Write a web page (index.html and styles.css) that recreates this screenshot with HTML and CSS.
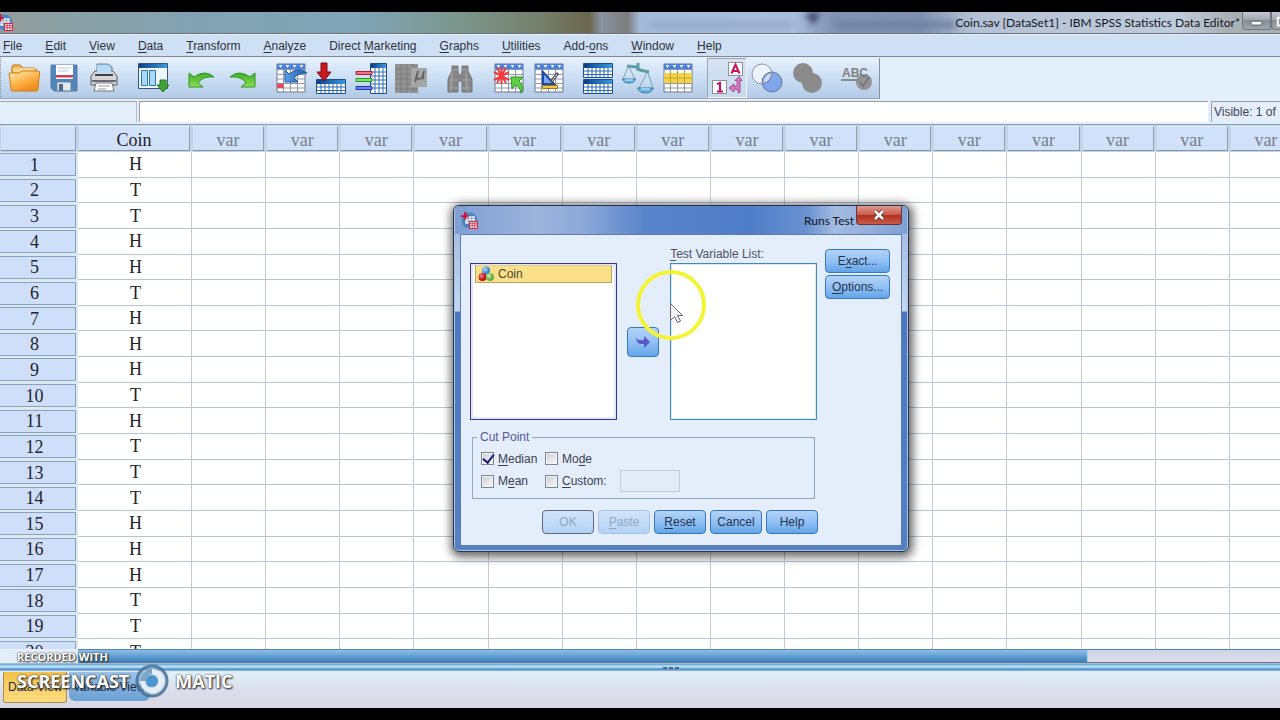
FILE: index.html
```html
<!DOCTYPE html>
<html lang="en">
<head>
    <meta charset="UTF-8">
    <meta name="viewport" content="width=device-width, initial-scale=1.0">
    <title>Coin.sav [DataSet1] - IBM SPSS Statistics Data Editor</title>
    <link rel="stylesheet" href="styles.css">
</head>
<body>
    <svg class="defs" aria-hidden="true">
        <defs>
            <linearGradient id="gBlue" x1="0" x2="1"><stop offset="0" stop-color="#0c3f86"/><stop offset="1" stop-color="#3a9ade"/></linearGradient>
            <linearGradient id="gOrange" x1="0" y1="0" x2="0.6" y2="1"><stop offset="0" stop-color="#fff0b8"/><stop offset="0.6" stop-color="#fdb043"/><stop offset="1" stop-color="#f08a1c"/></linearGradient>
            <linearGradient id="gGreen" x1="0" y1="0" x2="0" y2="1"><stop offset="0" stop-color="#3fae2c"/><stop offset="1" stop-color="#8be04f"/></linearGradient>
            <linearGradient id="gArrow" x1="0" y1="0" x2="1" y2="0"><stop offset="0" stop-color="#5a9be6"/><stop offset="1" stop-color="#1c5bb0"/></linearGradient>
            <radialGradient id="gRed" cx="0.35" cy="0.35"><stop offset="0" stop-color="#f58a8a"/><stop offset="1" stop-color="#c01010"/></radialGradient>
            <radialGradient id="gBall" cx="0.35" cy="0.35"><stop offset="0" stop-color="#b5dbf8"/><stop offset="1" stop-color="#3b86cf"/></radialGradient>
            <radialGradient id="gLime" cx="0.35" cy="0.35"><stop offset="0" stop-color="#d3f0b0"/><stop offset="1" stop-color="#62ad46"/></radialGradient>
            <symbol id="app" viewBox="0 0 16 16">
                <circle cx="8" cy="8" r="7.5" fill="#4c85c0"/>
                <path d="M4 4h9v7H4z" fill="#eef5fb"/>
                <path d="M4 6h9M4 8.5h9M7 4v7M10 4v7" stroke="#8aa6c2" stroke-width="0.8"/>
                <path d="M0 4h7M4 0v7" stroke="#cf1136" stroke-width="2"/>
                <path d="M8 9h7.5v6.500H8z" fill="#fff" stroke="#d32a46"/>
                <path d="M8 11h7.5M8 13h7.5M10.500 9v7M13 9v7" stroke="#d32a46" stroke-width="0.8"/>
            </symbol>
            <symbol id="sheet" viewBox="0 0 32 32">
                <path d="M2 2h28v28H2z" fill="#fff" stroke="#6d7488"/>
                <path d="M2 2h28v5H2z" fill="#4a80dc"/>
                <path d="M3.500 3h4l-2 3zM10.500 3h4l-2 3zM17.500 3h4l-2 3zM24.500 3h4l-2 3z" fill="#e8f0ff"/>
                <path d="M2 7.500h28M2 12.500h28M2 17h28M2 21.500h28M2 26h28M8.500 7v23M15.500 7v23M22.500 7v23" stroke="#9097aa" stroke-width="1"/>
            </symbol>
            <symbol id="strip" viewBox="0 0 30 15">
                <path d="M0.500 0.500h29v14H0.500z" fill="#fff" stroke="#1b4f96"/>
                <path d="M1 1h28v4H1z" fill="url(#gBlue)"/>
                <path d="M1 8h28M1 11.500h28M5 5v9M9 5v9M13 5v9M17 5v9M21 5v9M25 5v9" stroke="#2f6caf"/>
            </symbol>
        </defs>
    </svg>

    <div class="window">
        <header class="titlebar">
            <svg class="app-icon" viewBox="0 0 16 16" aria-hidden="true"><use href="#app"/></svg>
            <div class="glass" aria-hidden="true"><i class="haze"></i><i class="notch"></i><i class="haze"></i></div>
            <span class="title">Coin.sav [DataSet1] - IBM SPSS Statistics Data Editor*</span>
            <div class="winbuttons">
                <button aria-label="Minimize"><svg viewBox="0 0 28 16"><rect x="8.500" y="8.500" width="11" height="4" rx="1" fill="#fff" stroke="#59616e"/></svg></button>
                <button aria-label="Restore"><svg viewBox="0 0 28 16"><rect x="9" y="2" width="10" height="8" fill="none" stroke="#fff" stroke-width="2"/><rect x="6" y="5" width="10" height="8" fill="#8a929c" stroke="#fff" stroke-width="2"/></svg></button>
            </div>
        </header>

        <nav class="menubar">
            <a href="#"><u>F</u>ile</a>
            <a href="#"><u>E</u>dit</a>
            <a href="#"><u>V</u>iew</a>
            <a href="#"><u>D</u>ata</a>
            <a href="#"><u>T</u>ransform</a>
            <a href="#"><u>A</u>nalyze</a>
            <a href="#">Direct <u>M</u>arketing</a>
            <a href="#"><u>G</u>raphs</a>
            <a href="#"><u>U</u>tilities</a>
            <a href="#">Add-<u>o</u>ns</a>
            <a href="#"><u>W</u>indow</a>
            <a href="#"><u>H</u>elp</a>
        </nav>

        <div class="toolrow">
            <div class="toolbar">
                <div class="group">
                    <button aria-label="Open"><svg viewBox="0 0 32 32">
                        <path d="M4 24V5q0-2 2-2h6l3 3h11q2 0 2 2v4" fill="#f7b44c" stroke="#b8731a"/>
                        <path d="M5 10h22V6H5z" fill="#fbd58c"/>
                        <path d="M1 11h10l3-2h16q2 0 1.500 2L30 27q0 2-2 2H5q-2 0-2-2z" fill="url(#gOrange)" stroke="#cc7f1c"/>
                    </svg></button>
                    <button aria-label="Save"><svg viewBox="0 0 32 32">
                        <path d="M3 3h26v26H6l-3-3z" fill="#4f86bd" stroke="#5c7da3"/>
                        <path d="M8 3h17v14H8z" fill="#fafcff"/>
                        <path d="M10 6h13M10 9h10" stroke="#b9c9dd"/>
                        <path d="M8 13h17v2.500H8z" fill="#d03a55"/>
                        <path d="M9 20h14v9H9z" fill="#e4e8ee" stroke="#71839b"/>
                        <path d="M11 22h4v7h-4z" fill="#4a6c94"/>
                    </svg></button>
                    <button aria-label="Print"><svg viewBox="0 0 32 32">
                        <path d="M9 12V2h11l4 3v7z" fill="#9fd0f5" stroke="#6f8093"/>
                        <path d="M3 14l4-5h18l4 5v9H3z" fill="#d6d6d8" stroke="#5c5c60"/>
                        <path d="M9 11V3h11l3 3v5z" fill="#b4dcf9"/>
                        <path d="M7 13h18" stroke="#444" stroke-width="2"/>
                        <path d="M4 19h24" stroke="#6c6c70" stroke-width="2"/>
                        <path d="M8 21h16l2 8H6z" fill="#fff" stroke="#77787c"/>
                        <path d="M10 24h12M10 27h8" stroke="#9a9ba0"/>
                    </svg></button>
                </div>
                <div class="group">
                    <button aria-label="Recall dialogs"><svg viewBox="0 0 32 32">
                        <path d="M1.500 1.500h29v25h-29z" fill="#eef5fc" stroke="#34567f"/>
                        <path d="M2 2h28v4H2z" fill="url(#gBlue)"/>
                        <path d="M4.500 8.500h6v15h-6zM12.500 8.500h6v15h-6z" fill="#a8d8f4" stroke="#2b78ae"/>
                        <path d="M23 18h6v5h3l-6 7-6-7h3z" fill="#3fa435" stroke="#237a1e"/>
                    </svg></button>
                </div>
                <div class="group">
                    <button aria-label="Undo"><svg viewBox="0 0 32 32"><path d="M3 11v14h14l-5-4q4-7 16-6Q19 7 8 15z" fill="url(#gGreen)" stroke="#2f9624"/></svg></button>
                    <button aria-label="Redo"><svg viewBox="0 0 32 32"><path d="M29 11v14H15l5-4q-4-7-16-6 9-8 20 0z" fill="url(#gGreen)" stroke="#2f9624"/></svg></button>
                </div>
                <div class="group">
                    <button aria-label="Go to case"><svg viewBox="0 0 32 32"><use href="#sheet"/><path d="M2 21.500h6.500V26H2z" fill="#e8495a"/><path d="M10 8v12h13l-4-4q4-5 13-5-8-7-18 1z" fill="url(#gArrow)" stroke="#2458a0"/></svg></button>
                    <button aria-label="Go to variable"><svg viewBox="0 0 32 32"><use href="#strip" x="1" y="17" width="30" height="15"/><path d="M6 1h6v9h4l-7 9-7-9h4z" fill="#c8191f" stroke="#7f1115"/></svg></button>
                    <button aria-label="Variables"><svg viewBox="0 0 32 32">
                        <path d="M15.500 1.500h16v30h-16z" fill="#fff" stroke="#1b4f96"/>
                        <path d="M16 2h15v4H16z" fill="url(#gBlue)"/>
                        <path d="M16 10h15M16 14h15M16 18h15M16 22h15M16 26h15M20 6v25M24 6v25M28 6v25" stroke="#2f6caf"/>
                        <path d="M1 9.500h16v3H1z" fill="#f27285" stroke="#b71d37"/><path d="M1 16.500h16v3H1z" fill="#7ee06c" stroke="#249a22"/><path d="M1 24.500h16v3H1z" fill="#6b87ea" stroke="#2338a6"/>
                    </svg></button>
                    <button aria-label="Run descriptive statistics" disabled><svg viewBox="0 0 32 32">
                        <path d="M0 2h23v29H0z" fill="#929292"/><path d="M0 7h23M0 12h23M0 17h23M0 22h23M0 27h23M6 2v29M12 2v29M18 2v29" stroke="#7c7c7c"/>
                        <path d="M16 6h16v19H16z" fill="#a6a6a6"/><path d="M20 20l3-11M23 9q-3 8 1 8t5-8q-2 7 0 8" fill="none" stroke="#666" stroke-width="2"/>
                    </svg></button>
                </div>
                <div class="group">
                    <button aria-label="Find" disabled><svg viewBox="0 0 32 32">
                        <path d="M8 4h6v5l1 4h2l1-4V4h6v5l4 8v13H18V19h-4v11H4V17l4-8z" fill="#858585" stroke="#777"/><path d="M8 8h6M18 8h6M5 18h9M18 18h9M5 26h9M18 26h9" stroke="#a6a6a6"/><path d="M8 11l-1 18M22 11l1 18" stroke="#9d9d9d" stroke-width="2"/>
                    </svg></button>
                </div>
                <div class="group">
                    <button aria-label="Insert cases"><svg viewBox="0 0 32 32"><use href="#sheet"/><path d="M8.500 5v17M1 10l15 8M1 18l15-8M4 6l9 15M13 6L4 21" stroke="#ef3b3b" stroke-width="2"/><path d="M18 15h12l-4 4q6 6 2 12-1-7-6-8l-3 4z" fill="#5cd040" stroke="#2f9624"/></svg></button>
                    <button aria-label="Insert variable"><svg viewBox="0 0 32 32"><use href="#sheet"/><path d="M10 10v12h11z" fill="#7fa7f0" stroke="#1c48ae" stroke-width="2"/><path d="M25 11l-7 9" stroke="#4b4f57" stroke-width="3"/><path d="M24 12l-5 7" stroke="#d9dde4"/><path d="M9.500 23.500h15v3h-15z" fill="#f3c63c" stroke="#9c7712"/></svg></button>
                </div>
                <div class="group">
                    <button aria-label="Split file"><svg viewBox="0 0 32 32"><use href="#strip" x="1" y="1" width="30" height="15"/><use href="#strip" x="1" y="17" width="30" height="15"/></svg></button>
                    <button aria-label="Weight cases"><svg viewBox="0 0 32 32">
                        <path d="M16 1v8M5 4l9 1 4 3 9 2" fill="none" stroke="#5f9da6" stroke-width="3"/>
                        <path d="M6 5L1 17M7 5l6 12M25 11l-8 15M26 11l5 15" stroke="#7ba3af"/>
                        <path d="M0.500 17h13q-1 4-6.500 4t-6.500-4zM15.500 26h16q-2 5-8 5t-8-5z" fill="#5fb4e2" stroke="#3a7ba6"/>
                        <path d="M3 18h8M19 27h9" stroke="#e2f4fc"/>
                    </svg></button>
                    <button aria-label="Select cases"><svg viewBox="0 0 32 32"><use href="#sheet"/><path d="M2 11h28v10H2z" fill="#f2d24a"/><path d="M2 16h28M8.500 11v10M15.500 11v10M22.500 11v10" stroke="#c9a526"/></svg></button>
                </div>
                <div class="group">
                    <button class="pressed" aria-label="Value labels"><svg viewBox="0 0 32 32">
                        <rect x="17.500" y="0.500" width="14" height="13" fill="#fff" stroke="#8b8fa0"/><path d="M20.500 11.500l4-9 4 9M22 9h5" fill="none" stroke="#c8125a" stroke-width="2"/>
                        <rect x="1.500" y="18.500" width="14" height="13" fill="#fff" stroke="#8b8fa0"/><path d="M6 22l3-1v8M6 29.500h6" fill="none" stroke="#c8125a" stroke-width="2"/>
                        <path d="M18 26l5-4v2.500h2q2-1 1-6h-2l4-4 3 4h-2v12h-2v-3l-4-0.500V30z" fill="#d77cc0" stroke="#a04a8c"/>
                    </svg></button>
                    <button aria-label="Use variable sets"><svg viewBox="0 0 32 32"><circle cx="11" cy="12" r="10" fill="#eef4fd" stroke="#8d97ab"/><circle cx="21" cy="20" r="10" fill="#6b94e8" fill-opacity="0.75" stroke="#6379a8"/><path d="M20.500 10.500A10 10 0 0 1 12 21.500 10 10 0 0 1 20.500 10.500z" fill="#c6d8f6" stroke="#7f8aa3"/></svg></button>
                    <button aria-label="Show all variables" disabled><svg viewBox="0 0 32 32"><circle cx="12" cy="11" r="10" fill="#8b8b8b"/><circle cx="21" cy="21" r="10" fill="#8b8b8b"/></svg></button>
                </div>
                <div class="group">
                    <button aria-label="Spell check" disabled><svg viewBox="0 0 32 32"><circle cx="24" cy="20" r="8" fill="#949494"/><path d="M20 20l3 4 6-9" fill="none" stroke="#7a7a7a" stroke-width="2"/><text x="2" y="15" class="abc">ABC</text><path d="M1 18h18" stroke="#8a8a8a" stroke-width="2"/></svg></button>
                </div>
            </div>
        </div>

        <div class="valuebar">
            <span class="cellname"></span>
            <input class="cellvalue" type="text" aria-label="Cell value">
            <span class="visible">Visible: 1 of</span>
        </div>

        <main class="grid">
            <table>
                <colgroup><col class="c-num"><col class="c-coin"></colgroup>
                <thead><tr id="head"><th><span></span></th><th class="named"><span>Coin</span></th></tr></thead>
                <tbody id="rows"></tbody>
            </table>
        </main>

        <div class="scroll"><div class="thumb"></div></div>
        <div class="splitter"><i></i><i></i><i></i></div>
        <footer class="tabs">
            <button class="tab active">Data View</button>
            <button class="tab">Variable View</button>
        </footer>
    </div>

    <section class="dialog" role="dialog" aria-labelledby="dlgTitle">
        <div class="dlg-title">
            <svg class="app-icon" viewBox="0 0 16 16" aria-hidden="true"><use href="#app"/></svg>
            <h1 id="dlgTitle">Runs Test</h1>
            <button class="close" aria-label="Close"><svg viewBox="0 0 14 12"><path d="M3 2l8 8M11 2l-8 8" stroke="#5b2620" stroke-width="4"/><path d="M3 2l8 8M11 2l-8 8" stroke="#fff" stroke-width="2.500"/></svg></button>
        </div>
        <form class="dlg-body">
            <div class="lists">
                <div class="source" role="listbox" aria-label="Variables">
                    <div class="item" role="option" aria-selected="true">
                        <svg viewBox="0 0 16 16" aria-hidden="true"><circle cx="8" cy="4.500" r="4" fill="url(#gBall)"/><circle cx="4.500" cy="11" r="4" fill="url(#gRed)"/><circle cx="12" cy="11" r="4" fill="url(#gLime)"/></svg>
                        Coin
                    </div>
                </div>
                <button type="button" class="move" aria-label="Move variable"><svg viewBox="0 0 16 16"><path d="M1 3q1 4 8 3V2l6 6-6 6v-4Q1 11 1 3z" fill="#5b55c8"/></svg></button>
                <div class="target">
                    <span id="tvl"><u>T</u>est Variable List:</span>
                    <div class="box" role="listbox" aria-labelledby="tvl"></div>
                </div>
                <div class="side">
                    <button type="button">E<u>x</u>act...</button>
                    <button type="button"><u>O</u>ptions...</button>
                </div>
            </div>
            <fieldset>
                <legend>Cut Point</legend>
                <label><input type="checkbox" checked><span><u>M</u>edian</span></label>
                <label><input type="checkbox"><span>Mo<u>d</u>e</span></label>
                <span></span>
                <label><input type="checkbox"><span>M<u>e</u>an</span></label>
                <label><input type="checkbox"><span><u>C</u>ustom:</span></label>
                <input class="custom" type="text" aria-label="Custom cut point" disabled>
            </fieldset>
            <div class="actions">
                <button type="button" class="ok" disabled>OK</button>
                <button type="button" disabled><u>P</u>aste</button>
                <button type="button"><u>R</u>eset</button>
                <button type="button">Cancel</button>
                <button type="button">Help</button>
            </div>
        </form>
    </section>

    <svg class="pointer" viewBox="0 0 72 72" aria-hidden="true">
        <circle cx="36" cy="36" r="33" fill="none" stroke="#f4f436" stroke-width="4"/>
        <path d="M35.500 34.500v17l4-4 3 6 3-1.500-3-5.500h5z" fill="#f4f4f6" stroke="#6a6672"/>
    </svg>

    <div class="watermark">
        <span class="small">RECORDED WITH</span>
        <div class="brand">
            <span>SCREENCAST</span>
            <svg viewBox="0 0 36 36" aria-hidden="true"><circle cx="18" cy="18" r="15" fill="#a9c3d8" fill-opacity="0.35" stroke="#44719a" stroke-opacity="0.85" stroke-width="3"/><path d="M18 8.500A9.500 9.500 0 1 1 8.500 18" fill="none" stroke="#e6eef5" stroke-width="5"/><path d="M9 18a9.500 9.500 0 0 1 9-9.500" fill="none" stroke="#7fa5c6" stroke-width="5"/><circle cx="18" cy="18" r="6" fill="#4a95cf"/></svg>
            <span>MATIC</span>
        </div>
    </div>

    <script src="script.js"></script>
</body>
</html>
```
FILE: styles.css
```css
* {
    box-sizing: border-box;
}
body {
    margin: 0;
    min-height: 100vh;
    padding: 12px 0;
    background: #000;
    font-family: "Liberation Sans", Arial, sans-serif;
    font-size: 12px;
    color: #2b2f3a;
    overflow: hidden;
    position: relative;
}
button, input {
    font: inherit;
    color: inherit;
    margin: 0;
    padding: 0;
}
button svg {
    display: block;
}
.defs {
    position: absolute;
    width: 0;
    height: 0;
}
.window {
    height: calc(100vh - 24px);
    display: flex;
    flex-direction: column;
    background: #e3eefa;
    overflow: hidden;
}

/* title bar */
.titlebar {
    height: 22px;
    flex: none;
    display: flex;
    align-items: center;
    background: linear-gradient(90deg, #949c9b, #8ba1a4 5%, #83a3b3 15%, #7fa5b6 28%, #7d9891 35%, #76816d 42%, #6b6650 46%, #8a94a0 47%, #7d7c7c 49%, #a5bad9 50%, #a9bddc 62%, #8393b4 65%, #8090b0 72%, #b4c1d4 76%, #c0ccdb 92%, #a9b0b4 96%);
    border-bottom: 1px solid #6b7078;
}
.app-icon {
    width: 17px;
    height: 17px;
    flex: none;
}
.titlebar .app-icon {
    margin-left: -4px;
}
.glass {
    flex: 1;
    display: flex;
    align-items: center;
    justify-content: flex-end;
    gap: 14px;
    filter: blur(3px);
}
.haze {
    width: 140px;
    height: 6px;
    margin-top: 4px;
    background: #93a6c8;
}
.notch {
    border: 8px solid transparent;
    border-top: 12px solid #3c3d63;
    border-bottom: 0;
    margin-bottom: 8px;
}
.glass .haze:last-child {
    width: 120px;
    background: #6c7da2;
}
.title {
    font: 12px Lato, "Open Sans", sans-serif;
    color: #14161c;
    white-space: nowrap;
}
.winbuttons {
    display: flex;
    align-self: flex-start;
    margin: 0 -20px 0 2px;
}
.winbuttons button {
    width: 29px;
    height: 18px;
    border: 1px solid #6f7781;
    border-top: 0;
    border-radius: 0 0 0 4px;
    background: linear-gradient(#c3c8ce, #9da4ab 50%, #858c94 50%, #a0a7ae);
}

/* menus */
.menubar {
    height: 23px;
    flex: none;
    display: flex;
    align-items: center;
    gap: 23px;
    padding-left: 3px;
    background: #cfe0f5;
    border-top: 1px solid #e7f0fb;
    border-bottom: 1px solid #84888f;
}
.menubar a {
    color: #2d3139;
    text-decoration: none;
    white-space: nowrap;
}
u {
    text-underline-offset: 2px;
}

/* toolbar */
.toolrow {
    flex: none;
    display: flex;
    padding-top: 1px;
    background: #e3effb;
}
.toolbar {
    display: flex;
    gap: 9px;
    height: 41px;
    padding: 0 3px;
    background: linear-gradient(#e6f1fd, #cbdef4 50%, #b3cae6);
    border-right: 1px solid #8a9099;
    border-bottom: 1px solid #a4aab4;
    border-left: 1px dotted #8a93a2;
}
.group {
    display: flex;
}
.group button {
    width: 40px;
    height: 40px;
    display: flex;
    align-items: center;
    justify-content: center;
    border: 1px solid transparent;
    background: none;
}
.group .pressed {
    background: linear-gradient(#d6e3f2, #c7d9ee);
    border-color: #98a3b3 #f0f6fd #f0f6fd #98a3b3;
}
.group svg {
    width: 32px;
    height: 32px;
}
.abc {
    font: bold 12px "Liberation Sans", Arial, sans-serif;
    fill: #7e7e7e;
}

/* cell value bar */
.valuebar {
    height: 26px;
    flex: none;
    display: flex;
    padding: 2px 0;
    border-bottom: 1px solid #7fa3c4;
}
.cellname {
    width: 137px;
    border-top: 1px solid #a2a7b0;
    border-right: 1px solid #b6bcc7;
    margin-right: 2px;
}
.cellvalue {
    flex: 1;
    border: 1px solid #989da6;
    border-width: 1px 0 0 1px;
    background: #fff;
}
.visible {
    width: 69px;
    margin-left: 3px;
    padding: 3px 0 0 2px;
    border: 1px solid #989da6;
    border-width: 1px 0 0 1px;
    white-space: nowrap;
    color: #3f4450;
}

/* data grid */
.grid {
    flex: 1;
    min-height: 0;
    overflow: hidden;
    background: #fff;
}
table {
    width: 1304px;
    height: 540px;
    table-layout: fixed;
    border-collapse: separate;
    border-spacing: 0;
    font: 18px "Liberation Serif", "Times New Roman", serif;
    color: #22252c;
}
.c-num {
    width: 78px;
}
.c-coin {
    width: 114px;
}
th, td {
    padding: 0;
    text-align: center;
    font-weight: normal;
    line-height: 20px;
}
thead th {
    height: 27px;
    background: #c3d5e4;
    padding: 1px 2px 1px 1px;
    color: #767f8c;
}
th span {
    display: flex;
    align-items: center;
    justify-content: center;
    height: 25px;
    padding-top: 2px;
    background: #d0e1f9;
    border: 1px solid #e4eefb;
    border-width: 1px 1px 1px 0;
    border-right-color: #8e9db4;
    border-bottom-color: #8292ab;
}
thead .named {
    color: #1f2228;
}
tbody th {
    background: #dce9f0;
    padding: 1px 2px 1px 0;
}
tbody th span {
    height: 23px;
    padding: 0 6px 0 0;
    border: 1px solid #8ba2bd;
    border-left: 0;
    background: #cfdff9;
}
td {
    padding-left: 2px;
    border-right: 1px solid #c3cbdb;
    border-bottom: 1px solid #b9c4d4;
}

/* scroll bar, splitter, tabs */
.scroll {
    height: 14px;
    flex: none;
    margin-left: 78px;
    background: linear-gradient(#cdd6e6, #dedce8);
    border-top: 1px solid #4c86b8;
    border-bottom: 1px solid #5f7890;
}
.thumb {
    width: 84%;
    height: 12px;
    background: linear-gradient(#8fbfe8, #3a7fba);
    border-right: 1px solid #a9d4f2;
}
.splitter {
    height: 9px;
    flex: none;
    display: flex;
    gap: 2px;
    align-items: center;
    justify-content: center;
    padding-left: 62px;
    background: linear-gradient(#a9c9dc, #76a5c6 20%, #a9dcf8 30%, #a9dcf8 50%, #6ba3d8 60%, #5f8fc6 80%, #dcecf8 90%);
}
.splitter i {
    width: 4px;
    height: 2px;
    background: #4d6a88;
}
.tabs {
    height: 36px;
    flex: none;
    display: flex;
    align-items: flex-start;
    gap: 2px;
    padding-left: 3px;
    background: linear-gradient(#e0f0fa, #dcdfec 50%, #d8d6e0);
}
.tab {
    height: 29px;
    width: 81px;
    border: 0;
    border-radius: 0 0 6px 6px;
    background: linear-gradient(#9cc2e8, #6a9fd4);
    color: #1f2c44;
    white-space: nowrap;
    text-align: left;
    padding-left: 4px;
}
.tab.active {
    width: 64px;
    height: 31px;
    border: 1px solid #a98d4c;
    border-top: 0;
    border-radius: 0 0 3px 3px;
    background: linear-gradient(#f6c148, #fbdc80);
}

/* dialog */
.dialog {
    position: absolute;
    left: 453px;
    top: 205px;
    width: 456px;
    display: flex;
    flex-direction: column;
    padding: 0 6px 5px;
    border: 1px solid #26334b;
    border-radius: 6px;
    background: linear-gradient(#a7c0e3 30px, #c3d7ee 105px, #4a78c0 106px, #5580c2);
    box-shadow: inset 0 0 0 1px #a9c6ec, 1px 2px 10px 3px rgba(0, 0, 0, 0.6);
}
.dlg-title {
    display: flex;
    align-items: center;
    height: 28px;
    margin: 0 -5px;
    padding: 0 5px 0 6px;
    border-radius: 5px 5px 0 0;
    background: linear-gradient(90deg, #7f9fd2, #9db4dc 18%, #8ea9d8 28%, #5a84cb 42%, #4f7cc8 65%, #6b92d1 78%, #a3bbe0 84%, #93aedb 92%, #7f9fd3);
}
.dlg-title h1 {
    flex: 1;
    margin: 0;
    text-align: right;
    font: 12px Lato, "Open Sans", sans-serif;
    color: #101522;
}
.close {
    width: 46px;
    height: 19px;
    align-self: flex-start;
    display: flex;
    align-items: center;
    justify-content: center;
    margin-left: 2px;
    border: 1px solid #6a3436;
    border-top: 0;
    border-radius: 0 0 4px 4px;
    background: linear-gradient(#dc9a90, #cc5a4a 48%, #b1301d 52%, #c9594a);
}
.close svg {
    width: 14px;
    height: 12px;
}
.dlg-body {
    padding: 12px 11px 11px 9px;
    border: 1px solid #5b7db5;
    background: #e3eefa;
}
.lists {
    display: flex;
    align-items: flex-end;
}
.source {
    width: 148px;
    height: 157px;
    padding: 1px 4px;
    border: 1px solid #35359a;
    background: #fff;
    box-shadow: inset 0 0 0 2px #e2e6fb;
}
.item {
    display: flex;
    align-items: center;
    gap: 4px;
    height: 18px;
    padding-left: 2px;
    background: #fbe08a;
    border: 1px solid #b9a45c;
    border-top-color: #e6cf7c;
    color: #4c4530;
}
.item svg {
    width: 16px;
    height: 16px;
}
.move {
    width: 32px;
    margin: 0 10px 63px;
    display: flex;
    align-items: center;
    justify-content: center;
}
.move svg {
    width: 16px;
    height: 16px;
}
.target {
    width: 148px;
    margin-left: 1px;
}
.target span {
    display: block;
    line-height: 14px;
    margin-bottom: 2px;
    color: #4d5260;
}
.box {
    height: 157px;
    border: 1px solid #4689b8;
    background: #fff;
    box-shadow: inset 0 0 0 1px #d6ecf8;
}
.side {
    display: flex;
    flex-direction: column;
    gap: 2px;
    align-self: flex-start;
    margin: 2px 0 0 8px;
    width: 65px;
}
.dlg-body button {
    height: 24px;
    border: 1px solid #3479bb;
    border-radius: 4px;
    background: linear-gradient(#b3d3f8, #92c1f4 50%, #62a5e8);
    color: #26334d;
}
.dlg-body .move {
    height: 30px;
}
fieldset {
    display: grid;
    grid-template-columns: 61px 66px 60px;
    column-gap: 3px;
    row-gap: 1px;
    width: 343px;
    height: 69px;
    margin: 10px 0 0 2px;
    padding: 4px 8px;
    border: 1px solid #8fa5c0;
    align-content: start;
    align-items: center;
}
legend {
    padding: 0 3px;
    margin-left: -4px;
    color: #55579e;
}
label {
    display: flex;
    align-items: center;
    gap: 4px;
    height: 21px;
    white-space: nowrap;
    color: #3a4050;
}
input[type="checkbox"] {
    appearance: none;
    width: 13px;
    height: 13px;
    border: 1px solid #80868f;
    background: linear-gradient(135deg, #c9ccd2, #fafbfc);
    box-shadow: inset 0 0 0 1px #f2f4f6;
}
input[type="checkbox"]:checked::before {
    content: "";
    display: block;
    width: 5px;
    height: 9px;
    margin: -1px 0 0 3px;
    border: solid #1c1c7c;
    border-width: 0 2px 2px 0;
    rotate: 38deg;
}
.custom {
    width: 60px;
    height: 22px;
    margin-left: 6px;
    border: 1px solid #c3cbd6;
    background: #e3ecf6;
}
.actions {
    display: flex;
    gap: 4px;
    justify-content: flex-end;
    margin: 11px 72px 0 0;
}
.actions button {
    width: 52px;
}
.dlg-body button:disabled {
    background: linear-gradient(#d3e4fa, #b3d2f6);
    border-color: #a3c3e6;
    color: #93a6c2;
}
.dlg-body .ok:disabled {
    border-color: #5c6b82;
}

/* mouse pointer highlight */
.pointer {
    position: absolute;
    left: 635px;
    top: 269px;
    width: 72px;
    height: 72px;
    pointer-events: none;
}

/* recorder watermark */
.watermark {
    position: absolute;
    left: 17px;
    bottom: 21px;
    color: #fff;
    font: bold 18px "Open Sans", sans-serif;
    line-height: 22px;
    text-shadow: 1px 1px 2px #222, 0 0 2px #333;
    pointer-events: none;
}
.small {
    display: block;
    font-size: 11px;
    line-height: 12px;
}
.brand {
    display: flex;
    align-items: center;
    gap: 5px;
}
.brand svg {
    width: 36px;
    height: 36px;
}
```
FILE: script.js
```js
const values = ['H', 'T', 'T', 'H', 'H', 'T', 'H', 'H', 'H', 'T', 'H', 'T', 'T', 'T', 'H', 'H', 'H', 'T', 'T', 'T'];
const emptyColumns = 15;

const head = document.getElementById('head');
for (let i = 0; i < emptyColumns; i++) {
    head.insertAdjacentHTML('beforeend', '<th><span>var</span></th>');
}

document.getElementById('rows').innerHTML = values.map((value, i) =>
    `<tr><th><span>${i + 1}</span></th><td>${value}</td>${'<td></td>'.repeat(emptyColumns)}</tr>`
).join('');
```
